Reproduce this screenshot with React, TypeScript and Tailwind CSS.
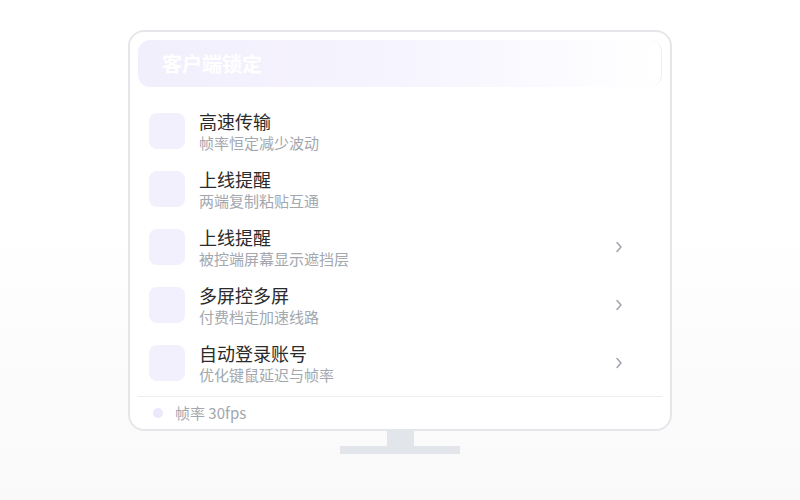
import React from "react";

interface Item {
  title: string;
  desc: string;
  arrow: boolean;
}

const items: Item[] = [
  { title: "高速传输", desc: "帧率恒定减少波动", arrow: false },
  { title: "上线提醒", desc: "两端复制粘贴互通", arrow: false },
  { title: "上线提醒", desc: "被控端屏幕显示遮挡层", arrow: true },
  { title: "多屏控多屏", desc: "付费档走加速线路", arrow: true },
  { title: "自动登录账号", desc: "优化键鼠延迟与帧率", arrow: true },
];

export default function App() {
  return (
    <div
      className="w-[800px] h-[500px] flex flex-col items-center pt-[30px] bg-gradient-to-b from-white from-45% to-[#f9f9fa]"
      style={{ fontFamily: '"Noto Sans CJK SC", "Noto Sans", sans-serif' }}
    >
      {/* 显示器 */}
      <div className="w-[544px] h-[401px] border-2 border-[#e4e6ea] rounded-[16px] bg-white pt-2 px-2 flex flex-col">
        <div className="h-[47px] shrink-0 rounded-[12px] bg-gradient-to-r from-[#f2effd] via-[#f6f4fe] to-white border-r border-[#eceef1] flex items-center pl-6">
          <span className="text-[20px] font-bold text-white leading-none">客户端锁定</span>
        </div>

        <div className="flex flex-col mt-[15px]">
          {items.map((it, i) => (
            <div key={i} className="h-[58px] flex items-center px-[11px]">
              <div className="w-9 h-9 rounded-[8px] bg-[#f2f0fd] shrink-0" />
              <div className="ml-[14px] flex flex-col flex-1">
                <span className="text-[18px] leading-[24px] text-[#2b2b2b]">{it.title}</span>
                <span className="text-[15px] leading-[20px] text-[#a3a7ae]">{it.desc}</span>
              </div>
              {it.arrow && (
                <svg width="8" height="12" viewBox="0 0 8 12" className="mr-[28px]">
                  <polyline points="2,1.5 6,6 2,10.5" fill="none" stroke="#9ca0a8" strokeWidth="1.4" strokeLinecap="round" strokeLinejoin="round" />
                </svg>
              )}
            </div>
          ))}
        </div>

        <div className="mt-[4px] border-t border-[#eceef1] flex-1 flex items-center pl-[15px]">
          <div className="w-[10px] h-[10px] rounded-full bg-[#ebe8fc]" />
          <span className="ml-[12px] text-[15px] text-[#a3a7ae]">帧率 30fps</span>
        </div>
      </div>

      {/* 支架 */}
      <div className="w-[27px] h-[15px] bg-[#e2e5e9]" />
      <div className="w-[120px] h-[8px] bg-[#e2e5e9]" />
    </div>
  );
}
